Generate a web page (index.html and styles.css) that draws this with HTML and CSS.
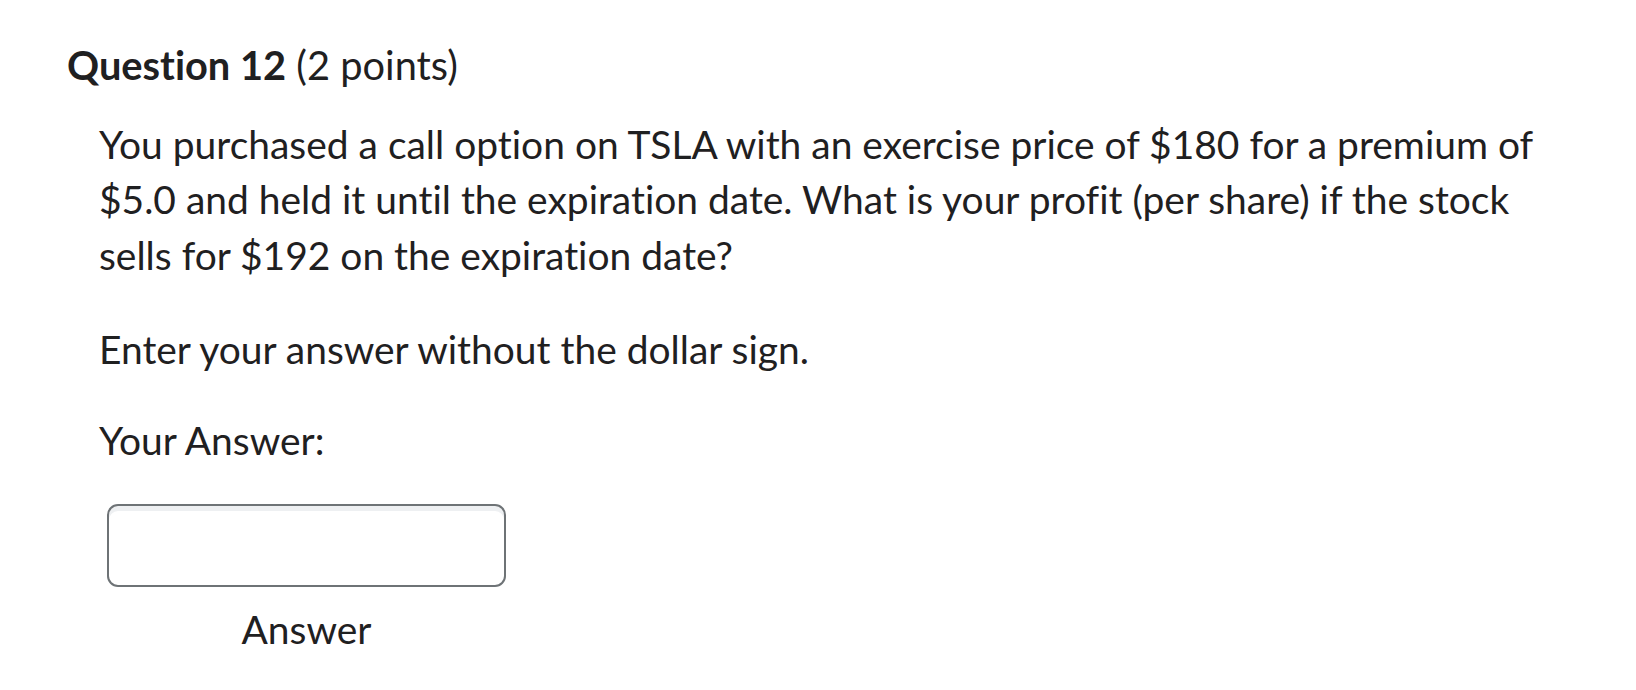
FILE: index.html
```html
<!DOCTYPE html>
<html>
<head>
<meta charset="utf-8">
<link rel="stylesheet" href="styles.css">
</head>
<body>
<div class="question">
  <h2 class="q-title"><strong>Question 12</strong> (2 points)</h2>
  <div class="q-body">
    <p class="q-text">You purchased a call option on TSLA with an exercise price of $180 for a premium of $5.0 and held it until the expiration date. What is your profit (per share) if the stock sells for $192 on the expiration date?</p>
    <p class="q-note">Enter your answer without the dollar sign.</p>
    <p class="q-label">Your Answer:</p>
    <div class="answer-field">
      <div class="answer-box"></div>
      <div class="answer-caption">Answer</div>
    </div>
  </div>
</div>
</body>
</html>
```
FILE: styles.css
```css
html, body {
  margin: 0;
  padding: 0;
  background: #ffffff;
}
body {
  font-family: Lato, "Open Sans", sans-serif;
  color: #1f2021;
  font-variant-ligatures: none;
  font-size: 38.95px;
  line-height: 55.5px;
}
.question {
  padding: 37px 0 0 67px;
}
.q-title {
  margin: 0;
  font-size: 39.8px;
  font-weight: 400;
  line-height: 55.5px;
}
.q-title strong {
  font-weight: 700;
}
.q-body {
  padding-left: 32px;
  padding-top: 24px;
}
.q-text {
  margin: 0;
  max-width: 1480px;
}
.q-note {
  margin: 39px 0 0 0;
}
.q-label {
  margin: 35px 0 0 0;
}
.answer-field {
  margin-top: 36px;
  margin-left: 8px;
  width: 399px;
  display: flex;
  flex-direction: column;
  align-items: center;
}
.answer-box {
  width: 100%;
  height: 83px;
  box-sizing: border-box;
  border: 2px solid #6e7376;
  border-radius: 11px;
  box-shadow: inset 0 5px 0 #eef0f2;
  background: #fff;
}
.answer-caption {
  margin-top: 15px;
}
```
